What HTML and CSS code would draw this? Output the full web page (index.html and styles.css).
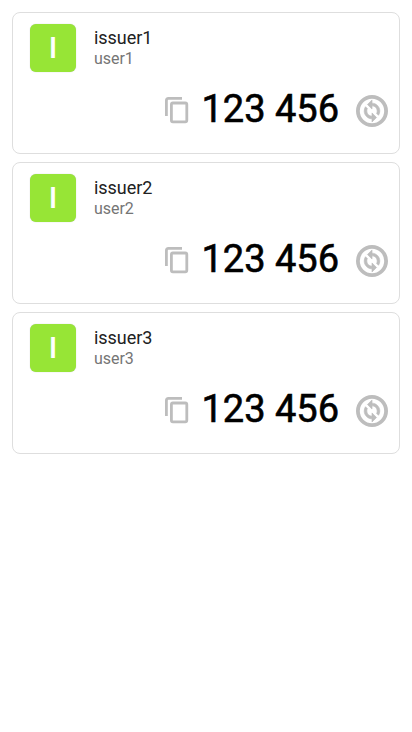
FILE: index.html
```html
<!DOCTYPE html>
<html lang="en">
<head>
<meta charset="utf-8">
<title>Codes</title>
<link rel="stylesheet" href="styles.css">
</head>
<body>
<svg width="0" height="0" class="defs">
<symbol id="copy" viewBox="0 0 24 28"><g fill="none" stroke="currentColor" stroke-width="2.800"><path d="M1.400 19V3.400Q1.400 1.400 3.400 1.400H17"/><rect x="6.400" y="6" width="15.400" height="18.800" rx="1.500"/></g></symbol>
<symbol id="sync" viewBox="0 0 32 32"><circle cx="16" cy="16" r="14.100" fill="none" stroke="currentColor" stroke-width="3.800"/><g transform="translate(.4 .4) scale(1.300)" stroke="currentColor" stroke-width=".5"><path d="M12 6v-2.500L8.500 7 12 10.500V8c2.200 0 4 1.800 4 4 0 .7-.15 1.300-.45 1.850L17 15.300c.65-.95 1-2.100 1-3.300 0-3.300-2.700-6-6-6zm0 10c-2.200 0-4-1.800-4-4 0-.7.15-1.300.45-1.850L7 8.700c-.65.95-1 2.100-1 3.300 0 3.300 2.700 6 6 6v2.500l3.500-3.500-3.500-3.500V16z"/></g></symbol>
</svg>
<main class="list">
<article class="card"><header class="account"><div class="avatar">I</div><div><div class="issuer">issuer1</div><div class="user">user1</div></div></header><div class="token"><svg class="copy"><use href="#copy"/></svg><span class="code">123 456</span><svg class="sync"><use href="#sync"/></svg></div></article>
<article class="card"><header class="account"><div class="avatar">I</div><div><div class="issuer">issuer2</div><div class="user">user2</div></div></header><div class="token"><svg class="copy"><use href="#copy"/></svg><span class="code">123 456</span><svg class="sync"><use href="#sync"/></svg></div></article>
<article class="card"><header class="account"><div class="avatar">I</div><div><div class="issuer">issuer3</div><div class="user">user3</div></div></header><div class="token"><svg class="copy"><use href="#copy"/></svg><span class="code">123 456</span><svg class="sync"><use href="#sync"/></svg></div></article>
</main>
</body>
</html>
```
FILE: styles.css
```css
* { box-sizing: border-box; }
body { margin: 0; background: #fff; font-family: Roboto, sans-serif; }
.defs { display: block; }
.list { display: flex; flex-direction: column; gap: 8px; padding: 12px; }
.card { height: 142px; border: 1px solid #dedede; border-radius: 8px; padding: 11px 11px 0 17px; }
.account { display: flex; gap: 18px; height: 48px; }
.avatar { width: 46px; height: 48px; border-radius: 6px; background: #97e536; box-shadow: 0 0 1px #bbb; color: #fff; font-size: 30px; font-weight: 500; line-height: 48px; text-align: center; }
.issuer { margin-top: 3px; font-size: 18px; line-height: 21px; letter-spacing: -.05px; color: #212121; }
.user { margin-top: 1px; font-size: 16px; line-height: 20px; letter-spacing: -.05px; color: #757575; }
.token { display: flex; align-items: center; justify-content: flex-end; margin-top: 14px; height: 50px; color: #bdbdbd; }
.token svg { fill: currentColor; }
.copy { width: 24px; height: 28px; margin-right: 12px; }
.code { font-size: 38px; line-height: 50px; color: #000; margin: -4px 17px 0 0; -webkit-text-stroke: .6px; }
.sync { width: 32px; height: 32px; }
```
